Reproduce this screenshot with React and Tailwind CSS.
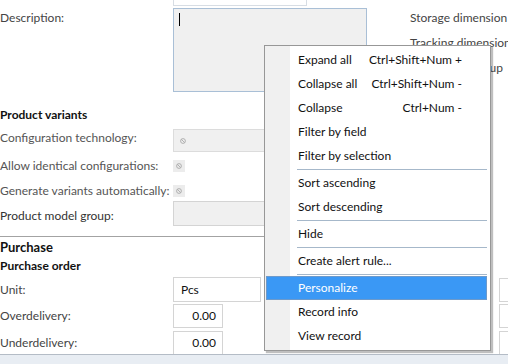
import clsx from "clsx";

const font = { fontFamily: "Lato, 'Liberation Sans', sans-serif" };

function Blocked() {
  return (
    <svg width="6" height="6" viewBox="0 0 6 6" className="shrink-0">
      <circle cx="3" cy="3" r="2.4" fill="none" stroke="#a9a9a9" strokeWidth="0.9" />
      <path d="M1.3 1.3 L4.7 4.7" stroke="#a9a9a9" strokeWidth="0.9" />
    </svg>
  );
}

function MenuItem({ label, shortcut, active }) {
  return (
    <div
      className={clsx(
        "ml-[1px] mr-[3px] flex h-[24px] items-center justify-between border pl-[31px] pr-[24px]",
        active ? "border-[#6d9acb] bg-[#3a98f5] text-white" : "border-transparent text-[#111111]"
      )}
    >
      <span>{label}</span>
      {shortcut ? <span>{shortcut}</span> : null}
    </div>
  );
}

function Sep() {
  return (
    <div className="flex h-[3px] items-start">
      <div className="ml-[32px] mr-[3px] mt-[1px] h-px flex-1 bg-[#a6b8ca]" />
    </div>
  );
}

function ContextMenu() {
  return (
    <div className="absolute left-[264px] top-[45px] h-[306px] w-[227px] border border-[#979797] bg-[linear-gradient(to_right,#f0f0f0_25px,#ffffff_25px)] pt-[2px] shadow-[2px_2px_1px_rgba(0,0,0,0.25)]">
      <MenuItem label="Expand all" shortcut="Ctrl+Shift+Num +" />
      <MenuItem label="Collapse all" shortcut="Ctrl+Shift+Num -" />
      <MenuItem label="Collapse" shortcut="Ctrl+Num -" />
      <MenuItem label="Filter by field" />
      <MenuItem label="Filter by selection" />
      <Sep />
      <MenuItem label="Sort ascending" />
      <MenuItem label="Sort descending" />
      <Sep />
      <MenuItem label="Hide" />
      <Sep />
      <MenuItem label="Create alert rule..." />
      <Sep />
      <MenuItem label="Personalize" active />
      <MenuItem label="Record info" />
      <MenuItem label="View record" />
    </div>
  );
}

function PurchaseRow({ label, value, wide, top }) {
  return (
    <div className={clsx("flex w-[530px] items-center", top)}>
      <div className="w-[173px] shrink-0 text-[#444444]">{label}</div>
      {wide ? (
        <div className="flex h-[25px] w-[88px] items-center border border-[#d4d4d4] bg-white px-[7px] text-[#111111]">
          {value}
        </div>
      ) : (
        <div className="flex h-[24px] w-[50px] items-center justify-end border border-[#d4d4d4] bg-white pr-[6px] text-[#111111]">
          {value}
        </div>
      )}
      <div className="ml-auto h-[24px] w-[31px] border border-[#d4d4d4]" />
    </div>
  );
}

export default function App() {
  return (
    <div className="relative h-[364px] w-[508px] overflow-hidden bg-white text-[12px] leading-[16px]" style={font}>
      <div className="flex">
        <div className="w-[410px] shrink-0">
          <div className="ml-[173px] h-[6px] w-[134px] border-x border-b border-[#d7dde4]" />
          <div className="mt-[2px] flex items-start">
            <div className="w-[173px] shrink-0 pt-[2px] text-[#444444]">Description:</div>
            <div className="h-[84px] w-[194px] border border-[#a9bfd6] bg-[#f0f0f0] pl-[5px] pt-[4px]">
              <div className="h-[13px] w-px bg-black" />
            </div>
          </div>
          <div className="mt-[15px] font-bold text-[#111111]">Product variants</div>
          <div className="mt-[6px] flex items-start">
            <div className="w-[173px] shrink-0 pt-[1px] text-[#555555]">Configuration technology:</div>
            <div className="flex h-[23px] w-[130px] items-center border border-[#dcdcdc] bg-[#f0f0f0] pl-[6px]">
              <Blocked />
            </div>
          </div>
          <div className="mt-[6px] flex items-center">
            <div className="w-[173px] shrink-0 text-[#555555]">Allow identical configurations:</div>
            <div className="flex h-[12px] w-[12px] items-center justify-center bg-[#ececec]">
              <Blocked />
            </div>
          </div>
          <div className="mt-[9px] flex items-center">
            <div className="w-[173px] shrink-0 text-[#555555]">Generate variants automatically:</div>
            <div className="flex h-[12px] w-[12px] items-center justify-center bg-[#ececec]">
              <Blocked />
            </div>
          </div>
          <div className="mt-[2px] flex items-start">
            <div className="w-[173px] shrink-0 pt-[7px] text-[#333333]">Product model group:</div>
            <div className="h-[25px] w-[130px] border border-[#d4d4d4] bg-[#f0f0f0]" />
          </div>
        </div>
        <div className="whitespace-nowrap pt-[10px] text-[#444444]">
          <div>Storage dimension group:</div>
          <div className="mt-[9px]">Tracking dimension group:</div>
          <div className="mt-[9px]">Item model group</div>
        </div>
      </div>

      <div className="mt-[10px] h-px w-[410px] bg-[#a3a3a3]" />
      <div className="mt-[2px] text-[13px] font-bold text-[#111111]">Purchase</div>
      <div className="mt-[3px] font-bold text-[#111111]">Purchase order</div>
      <PurchaseRow label="Unit:" value="Pcs" wide top="mt-[3px]" />
      <PurchaseRow label="Overdelivery:" value="0.00" top="mt-[2px]" />
      <PurchaseRow label="Underdelivery:" value="0.00" top="mt-[3px]" />

      <div className="absolute inset-x-0 bottom-0 h-[10px] border-t border-[#b4bcc6] bg-[#e8edf3]" />
      <ContextMenu />
    </div>
  );
}
